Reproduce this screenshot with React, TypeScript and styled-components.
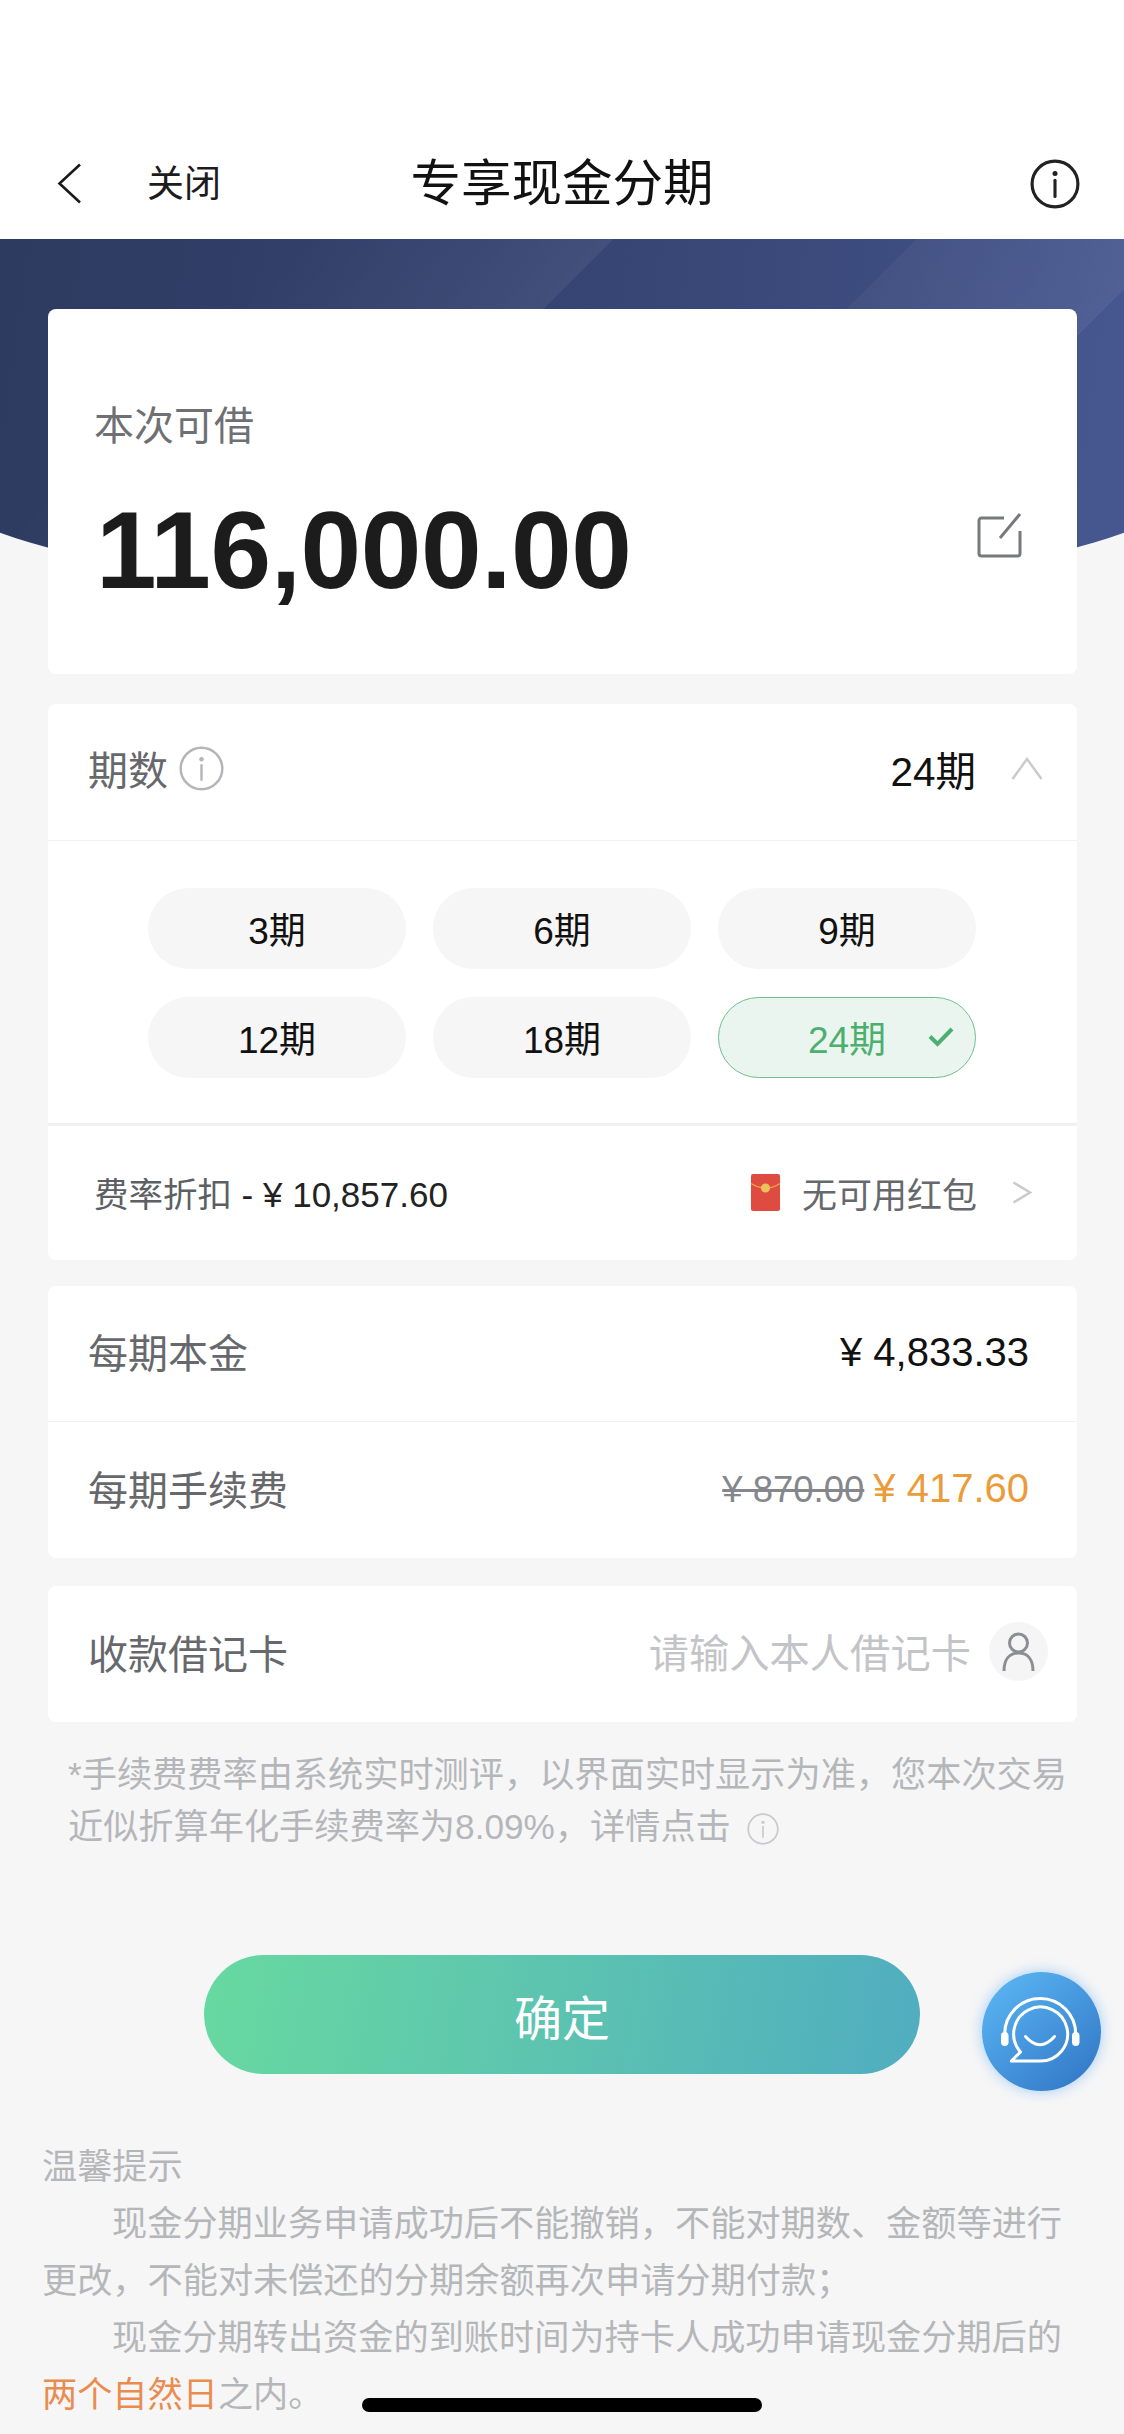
import React from "react";
import styled, { createGlobalStyle } from "styled-components";

const Global = createGlobalStyle`
  html, body { margin: 0; padding: 0; background: #f6f6f6; }
  body { font-family: "Liberation Sans", "Noto Sans CJK SC", sans-serif; }
  * { box-sizing: border-box; }
`;

const Page = styled.div`
  position: relative;
  width: 1124px;
  height: 2434px;
  overflow: hidden;
  background: #f6f6f6;
`;

const NavBar = styled.header`
  display: grid;
  grid-template-columns: 1fr auto 1fr;
  align-items: center;
  height: 239px;
  padding: 128px 57px 0 57px;
  background: #fff;
  color: #111;
`;
const NavLeft = styled.div`
  display: flex;
  align-items: center;
  gap: 65px;
  height: 111px;
`;
const CloseText = styled.span`
  font-size: 37px;
  color: #1c1c1c;
  margin-top: -5px;
`;
const Title = styled.h1`
  margin: 0;
  font-size: 50.5px;
  font-weight: 400;
  line-height: 111px;
  color: #111;
`;
const NavRight = styled.div`
  display: flex;
  justify-content: flex-end;
  margin-right: -13px;
`;

const Hero = styled.section`
  position: relative;
  padding: 70px 47px 0 48px;
  &::before {
    content: "";
    position: absolute;
    left: -78px;
    top: 0;
    width: 1280px;
    height: 360px;
    border-radius: 0 0 640px 640px / 0 0 127px 127px;
    background:
      linear-gradient(135deg, rgba(255,255,255,0) 267px, rgba(255,255,255,.06) 489px, rgba(255,255,255,0) 489px),
      linear-gradient(135deg, rgba(255,255,255,0) 703px, rgba(255,255,255,.035) 703px, rgba(255,255,255,.06) 886px, rgba(255,255,255,0) 886px),
      linear-gradient(98deg, #2d3b60 78px, #34426f 560px, #3d4c7e 950px, #46568f 1202px);
  }
`;

const Card = styled.div`
  position: relative;
  background: #fff;
  border-radius: 8px;
`;

const AmountCard = styled(Card)`
  display: flex;
  flex-direction: column;
  height: 365px;
  padding: 90px 47px 0 46px;
`;
const AmountLabel = styled.div`
  font-size: 40px;
  line-height: 54px;
  color: #6f7074;
`;
const AmountRow = styled.div`
  display: flex;
  align-items: center;
  justify-content: space-between;
  margin-top: 32px;
`;
const AmountValue = styled.div`
  font-size: 109px;
  font-weight: 700;
  line-height: 122px;
  color: #1c1c1c;
  letter-spacing: -0.4px;
  margin: 4px 0 0 2px;
`;
const EditWrap = styled.div`
  display: flex;
  margin: -26px 7px 0 0;
`;

const Stack = styled.div`
  display: flex;
  flex-direction: column;
  margin: 0 47px 0 48px;
`;
const TermCard = styled(Card)`
  margin-top: 30px;
`;
const MoneyCard = styled(Card)`
  margin-top: 26px;
`;
const BankCard = styled(Card)`
  margin-top: 28px;
`;

const Row = styled.div<{ $h: number; $line?: number; $lift?: number }>`
  display: flex;
  align-items: center;
  justify-content: space-between;
  height: ${(p) => p.$h}px;
  padding: 0 48px ${(p) => p.$lift ?? 5}px 40px;
  border-bottom: ${(p) => (p.$line ? `${p.$line}px solid #f1f1f2` : "none")};
`;
const Label = styled.span`
  font-size: 40px;
  color: #66686c;
`;
const LabelGroup = styled.div`
  display: flex;
  align-items: center;
  gap: 11px;
`;
const TermValue = styled.div`
  display: flex;
  align-items: center;
  gap: 35px;
  margin-right: -14px;
  font-size: 40.5px;
  color: #111;
`;

const OptionGrid = styled.div`
  display: grid;
  grid-template-columns: repeat(3, 258px);
  grid-auto-rows: 81px;
  column-gap: 27px;
  row-gap: 28px;
  padding: 47px 0 45px 100px;
  border-bottom: 3px solid #f1f1f2;
`;
const Option = styled.div<{ $on?: boolean }>`
  position: relative;
  display: flex;
  align-items: center;
  justify-content: center;
  padding-bottom: 2px;
  border-radius: 41px;
  font-size: 37px;
  color: ${(p) => (p.$on ? "#4caf6e" : "#111")};
  background: ${(p) => (p.$on ? "#ebf5f0" : "#f6f6f6")};
  border: ${(p) => (p.$on ? "1.5px solid #6fc08f" : "none")};
`;
const CheckWrap = styled.span`
  position: absolute;
  right: 21px;
  top: 28px;
  display: flex;
`;

const RateRow = styled.div`
  display: flex;
  align-items: center;
  justify-content: space-between;
  height: 134px;
  padding: 0 45px 2px 46px;
`;
const RateText = styled.span`
  font-size: 34.5px;
  color: #5d5f63;
  span {
    font-size: 35px;
    color: #222;
  }
`;
const PacketGroup = styled.div`
  display: flex;
  align-items: center;
`;
const PacketText = styled.span`
  margin: 0 35px 0 22px;
  font-size: 35px;
  color: #66686c;
`;

const MoneyValue = styled.span`
  margin-top: 2px;
  font-size: 40px;
  color: #111;
`;
const FeeGroup = styled.div`
  display: flex;
  align-items: baseline;
  gap: 9px;
  margin-top: 2px;
`;
const OldFee = styled.span`
  font-size: 36.5px;
  color: #85878c;
  text-decoration: line-through;
`;
const NewFee = styled.span`
  font-size: 40px;
  color: #ec9b3a;
`;
const BankRow = styled(Row)`
  padding-right: 29px;
`;
const Placeholder = styled.span`
  font-size: 40.3px;
  color: #c3c4c7;
  margin-top: -2px;
`;
const BankRight = styled.div`
  display: flex;
  align-items: center;
  gap: 18px;
`;
const Avatar = styled.div`
  display: flex;
  align-items: center;
  justify-content: center;
  width: 59px;
  height: 59px;
  border-radius: 50%;
  background: #f5f5f6;
`;

const Note = styled.p`
  margin: 27px 0 0;
  padding: 0 38px 0 68px;
  font-size: 35.2px;
  line-height: 52px;
  color: #b5b6ba;
  svg { vertical-align: -6px; margin-left: 16px; }
`;

const Confirm = styled.button`
  display: block;
  width: 716px;
  height: 119px;
  margin: 102px 0 0 204px;
  border: 0;
  border-radius: 60px;
  background: linear-gradient(100deg, #68d9a0, #50adc0);
  color: #fff;
  font-family: inherit;
  font-size: 48px;
`;

const Tips = styled.section`
  margin-top: 64px;
  padding: 0 37px 0 42px;
  font-size: 35.2px;
  line-height: 57px;
  color: #b5b6b9;
`;
const TipPara = styled.p`
  margin: 0;
  text-indent: 70px;
`;
const Highlight = styled.span`
  color: #ea8c50;
`;

const ChatFab = styled.div`
  position: absolute;
  left: 982px;
  top: 1972px;
  width: 119px;
  height: 119px;
  border-radius: 50%;
  background: linear-gradient(140deg, #5dbaf7, #2f73c3);
  box-shadow: 0 0 14px rgba(90, 170, 250, 0.55);
`;
const HomeBar = styled.div`
  position: absolute;
  left: 362px;
  top: 2398px;
  width: 400px;
  height: 14px;
  border-radius: 7px;
  background: #000;
`;

const InfoIcon = ({ size, color, sw }: { size: number; color: string; sw: number }) => (
  <svg width={size} height={size} viewBox="0 0 48 48" fill="none">
    <circle cx="24" cy="24" r={24 - sw / 2 - 0.5} stroke={color} strokeWidth={sw} />
    <circle cx="24" cy="14" r="2.4" fill={color} />
    <path d="M24 20.5V36" stroke={color} strokeWidth={sw} strokeLinecap="round" />
  </svg>
);

export default function App() {
  return (
    <Page>
      <Global />
      <NavBar>
        <NavLeft>
          <svg width="25" height="41" viewBox="0 0 25 41" fill="none">
            <path d="M23 1.5 2.5 20.5 23 39.5" stroke="#1a1a1a" strokeWidth="2.6" />
          </svg>
          <CloseText>关闭</CloseText>
        </NavLeft>
        <Title>专享现金分期</Title>
        <NavRight>
          <InfoIcon size={50} color="#222" sw={3} />
        </NavRight>
      </NavBar>

      <Hero>
        <AmountCard>
          <AmountLabel>本次可借</AmountLabel>
          <AmountRow>
            <AmountValue>116,000.00</AmountValue>
            <EditWrap>
              <svg width="46" height="45" viewBox="0 0 46 45" fill="none">
                <path d="M27 5H4.5A2.5 2.5 0 0 0 2 7.5v33A2.5 2.5 0 0 0 4.5 43h36a2.5 2.5 0 0 0 2.5-2.5V18" stroke="#77797d" strokeWidth="3" />
                <path d="M23 25 43 1" stroke="#77797d" strokeWidth="3" />
              </svg>
            </EditWrap>
          </AmountRow>
        </AmountCard>
      </Hero>

      <Stack>
        <TermCard>
          <Row $h={137} $line={1} $lift={8}>
            <LabelGroup>
              <Label>期数</Label>
              <InfoIcon size={45} color="#b4b5b9" sw={2.6} />
            </LabelGroup>
            <TermValue>
              24期
              <svg width="32" height="23" viewBox="0 0 32 23" fill="none">
                <path d="M1.5 22 16 2 30.5 22" stroke="#c9cace" strokeWidth="2.4" />
              </svg>
            </TermValue>
          </Row>
          <OptionGrid>
            <Option>3期</Option>
            <Option>6期</Option>
            <Option>9期</Option>
            <Option>12期</Option>
            <Option>18期</Option>
            <Option $on>
              24期
              <CheckWrap>
                <svg width="26" height="21" viewBox="0 0 26 21" fill="none">
                  <path d="M2 10.5 9.5 18 24 3" stroke="#4caf6e" strokeWidth="4" />
                </svg>
              </CheckWrap>
            </Option>
          </OptionGrid>
          <RateRow>
            <RateText>
              费率折扣 <span>- ¥ 10,857.60</span>
            </RateText>
            <PacketGroup>
              <svg width="29" height="37" viewBox="0 0 29 37">
                <rect width="29" height="37" rx="2" fill="#df4b40" />
                <path d="M0 9.5Q14.5 19 29 9.5" fill="none" stroke="#eea24a" strokeWidth="1.4" />
                <circle cx="14.5" cy="14" r="4.6" fill="#e9c25e" />
              </svg>
              <PacketText>无可用红包</PacketText>
              <svg width="20" height="23" viewBox="0 0 20 23" fill="none">
                <path d="M1.5 1.5 18 11.5 1.5 21.5" stroke="#c9cace" strokeWidth="2.4" />
              </svg>
            </PacketGroup>
          </RateRow>
        </TermCard>

        <MoneyCard>
          <Row $h={136} $line={1}>
            <Label>每期本金</Label>
            <MoneyValue>¥ 4,833.33</MoneyValue>
          </Row>
          <Row $h={136}>
            <Label>每期手续费</Label>
            <FeeGroup>
              <OldFee>¥ 870.00</OldFee>
              <NewFee>¥ 417.60</NewFee>
            </FeeGroup>
          </Row>
        </MoneyCard>

        <BankCard>
          <BankRow $h={136}>
            <Label>收款借记卡</Label>
            <BankRight>
              <Placeholder>请输入本人借记卡</Placeholder>
              <Avatar>
                <svg width="33" height="40" viewBox="0 0 33 40" fill="none">
                  <circle cx="16.5" cy="11" r="9" stroke="#8c8e93" strokeWidth="3" />
                  <path d="M2 39c0-11 5-18 14.5-18S31 28 31 39" stroke="#8c8e93" strokeWidth="3" />
                </svg>
              </Avatar>
            </BankRight>
          </BankRow>
        </BankCard>
      </Stack>

      <Note>
        *手续费费率由系统实时测评，以界面实时显示为准，您本次交易近似折算年化手续费率为8.09%，详情点击
        <InfoIcon size={32} color="#c9cace" sw={2.6} />
      </Note>

      <Confirm>确定</Confirm>

      <Tips>
        <div>温馨提示</div>
        <TipPara>现金分期业务申请成功后不能撤销，不能对期数、金额等进行更改，不能对未偿还的分期余额再次申请分期付款；</TipPara>
        <TipPara>现金分期转出资金的到账时间为持卡人成功申请现金分期后的</TipPara>
        <div>
          <Highlight>两个自然日</Highlight>之内。
        </div>
      </Tips>

      <ChatFab>
        <svg width="119" height="119" viewBox="0 0 119 119" fill="none">
          <path d="M22.7 62a35.5 35.5 0 0 1 71 0" stroke="#fff" strokeWidth="3" />
          <rect x="19" y="60" width="7.5" height="14" rx="3.7" fill="#fff" />
          <rect x="90" y="60" width="7.5" height="14" rx="3.7" fill="#fff" />
          <path d="M38.5 80A27 27 0 1 1 57.7 89H29.3Z" stroke="#fff" strokeWidth="3" strokeLinejoin="round" />
          <path d="M43.5 64.5Q58 81 72.5 64.5" stroke="#fff" strokeWidth="3" strokeLinecap="round" />
        </svg>
      </ChatFab>
      <HomeBar />
    </Page>
  );
}
